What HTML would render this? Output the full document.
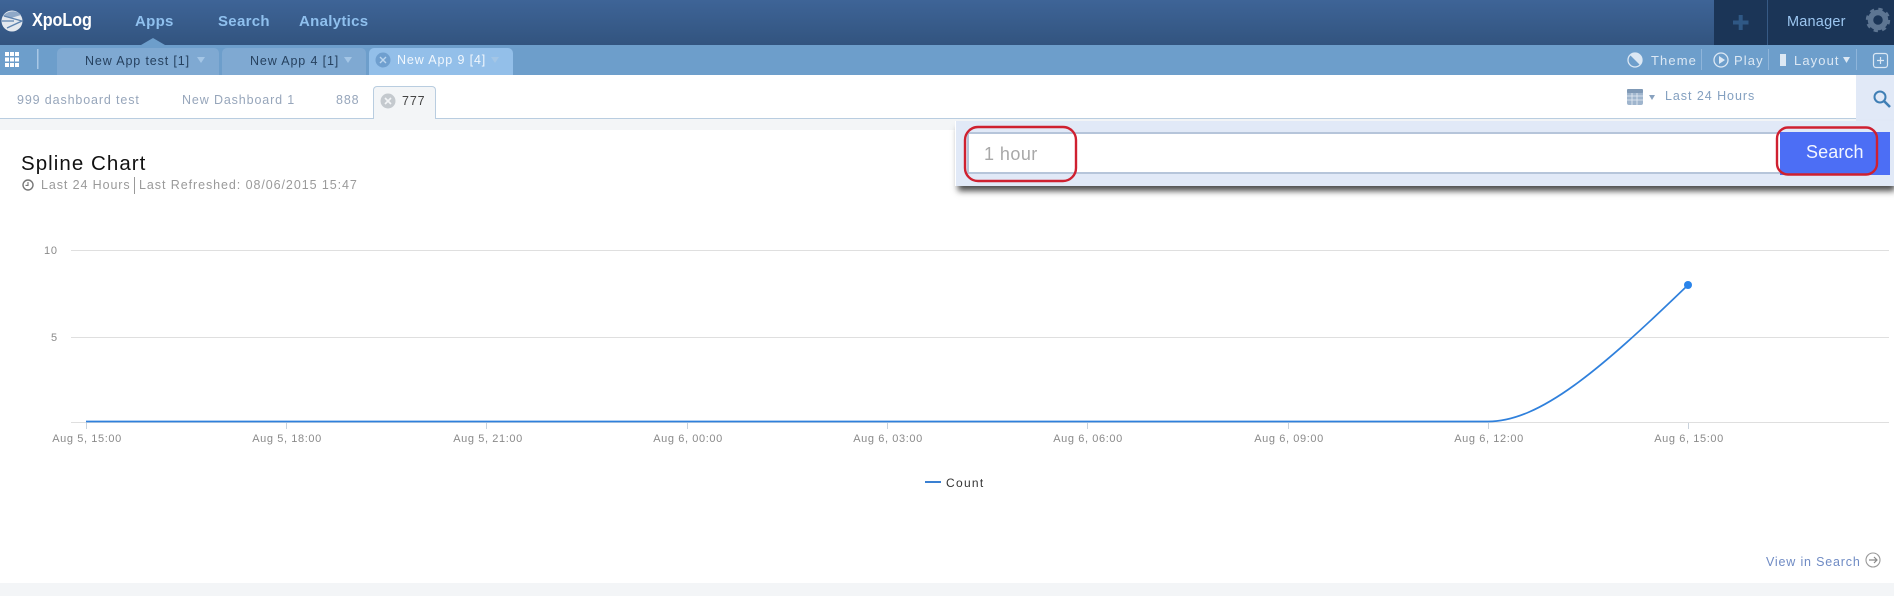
<!DOCTYPE html>
<html><head><meta charset="utf-8"><style>
html,body{margin:0;padding:0;background:#fff}
body{width:1894px;height:596px;position:relative;overflow:hidden;font-family:"Liberation Sans",sans-serif}
.a{position:absolute;white-space:nowrap;line-height:1}
.t{font-size:12.5px;letter-spacing:.87px}
.tab{position:absolute;top:48px;height:27px;border-radius:5px 5px 0 0;background:#7fa9d2}
.x{font-size:11px;letter-spacing:.6px;color:#8a8a8a;top:433.500px;width:90px;text-align:center}
.h{font-size:13px;letter-spacing:1.1px;color:#dce8f4;top:54px}
.n{font-size:15px;font-weight:bold;color:#8fc0ee;letter-spacing:.3px;top:14px}
svg{position:absolute;left:0;top:0}
</style></head><body>
<div class="a" style="left:0;top:0;width:1894px;height:45px;background:linear-gradient(#3e6497,#32547f)"></div>
<div class="a" style="left:1714px;top:0;width:180px;height:45px;background:#1b3557"></div>
<div class="a" style="left:1767px;top:0;width:1px;height:45px;background:#375a85"></div>
<div class="a" style="left:0;top:45px;width:1894px;height:30px;background:#6d9ecb"></div>
<div class="a" style="left:0;top:118px;width:1894px;height:12px;background:#f3f5f7"></div>
<div class="a" style="left:0;top:118px;width:1856px;height:1px;background:#b9cde0"></div>
<div class="a" style="left:0;top:583px;width:1894px;height:13px;background:#f3f5f7"></div>

<div class="a" style="left:32px;top:11px;font-size:18px;font-weight:bold;color:#fff;letter-spacing:-.1px;transform:scaleX(.9);transform-origin:left">XpoLog</div>
<div class="a n" style="left:135px">Apps</div>
<div class="a n" style="left:218px">Search</div>
<div class="a n" style="left:299px">Analytics</div>
<div class="a" style="left:1787px;top:15px;font-size:14.5px;color:#9cc6f0;letter-spacing:.2px">Manager</div>

<div class="tab" style="left:57px;width:162px"></div>
<div class="tab" style="left:222px;width:144px"></div>
<div class="tab" style="left:369px;width:144px;background:#93bfe9"></div>
<div class="a t" style="left:85px;top:55px;color:#26415f">New App test [1]</div>
<div class="a t" style="left:250px;top:55px;color:#26415f">New App 4 [1]</div>
<div class="a t" style="left:397px;top:54px;color:#f1f7fd">New App 9 [4]</div>

<div class="a t" style="left:17px;top:94px;color:#97a6bb">999 dashboard test</div>
<div class="a t" style="left:182px;top:94px;color:#97a6bb">New Dashboard 1</div>
<div class="a t" style="left:336px;top:94px;color:#97a6bb">888</div>
<div class="a" style="left:373px;top:86px;width:63px;height:33px;box-sizing:border-box;background:#f3f5f7;border:1px solid #b9cde0;border-bottom:0;border-radius:4px 4px 0 0"></div>
<div class="a t" style="left:402px;top:95px;color:#444">777</div>

<div class="a" style="left:21px;top:154px;font-size:20.500px;color:#111;letter-spacing:1.05px">Spline Chart</div>
<div class="a" style="left:41px;top:179px;font-size:12.500px;color:#9a9a9a;letter-spacing:.9px">Last 24 Hours</div>
<div class="a" style="left:134px;top:177px;width:1px;height:17px;background:#999"></div>
<div class="a" style="left:139px;top:179px;font-size:12.500px;color:#9a9a9a;letter-spacing:.93px">Last Refreshed: 08/06/2015 15:47</div>

<div class="a h" style="left:1651px">Theme</div>
<div class="a h" style="left:1734px">Play</div>
<div class="a h" style="left:1794px">Layout</div>
<div class="a" style="left:1665px;top:90px;font-size:12.500px;letter-spacing:.95px;color:#84a0c0">Last 24 Hours</div>

<!-- search panel -->
<div class="a" style="left:1856px;top:75px;width:38px;height:46px;background:#e1e9f7"></div>
<div class="a" style="left:955px;top:121px;width:939px;height:65px;box-sizing:border-box;background:#e1e9f7;border-left:1px solid #fff;box-shadow:2px 6px 6px -1px rgba(0,0,0,.7)"></div>
<div class="a" style="left:967px;top:132px;width:815px;height:42px;box-sizing:border-box;background:#fff;border:2px solid #b6c5da;border-right:0"></div>
<div class="a" style="left:984px;top:145px;font-size:18px;color:#a8a8a8;letter-spacing:.45px">1 hour</div>
<div class="a" style="left:1780px;top:132px;width:110px;height:43px;background:#4c6ef5"></div>
<div class="a" style="left:1806px;top:143px;font-size:18px;color:#f2f5ff;letter-spacing:.1px">Search</div>

<!-- chart labels -->
<div class="a" style="left:44px;top:246px;font-size:11px;color:#8a8a8a;letter-spacing:.8px">10</div>
<div class="a" style="left:51px;top:333px;font-size:11px;color:#8a8a8a">5</div>
<div class="a x" style="left:42px">Aug 5, 15:00</div>
<div class="a x" style="left:242px">Aug 5, 18:00</div>
<div class="a x" style="left:443px">Aug 5, 21:00</div>
<div class="a x" style="left:643px">Aug 6, 00:00</div>
<div class="a x" style="left:843px">Aug 6, 03:00</div>
<div class="a x" style="left:1043px">Aug 6, 06:00</div>
<div class="a x" style="left:1244px">Aug 6, 09:00</div>
<div class="a x" style="left:1444px">Aug 6, 12:00</div>
<div class="a x" style="left:1644px">Aug 6, 15:00</div>
<div class="a" style="left:946px;top:477px;font-size:12px;color:#333;letter-spacing:1.3px">Count</div>
<div class="a" style="left:1766px;top:555.500px;font-size:12.500px;color:#6f8bc4;letter-spacing:.82px">View in Search</div>

<svg width="1894" height="596" viewBox="0 0 1894 596" fill="none">
 <!-- nav notch -->
 <path d="M141 45L153 38L165 45Z" fill="#6d9ecb"/>
 <!-- logo -->
 <circle cx="12" cy="21" r="10.500" fill="#e3e8ee"/>
 <path d="M3 16C8 10 17 10 21 15L11 18Z" fill="#8fa9c8"/>
 <path d="M4 16L22 21L7 28M2 21L14 21" stroke="#5c82ae" stroke-width="1.300"/>
 <!-- grid icon -->
 <path fill="#fff" d="M5 52h4v4H5zM10 52h4v4h-4zM15 52h4v4h-4zM5 57.500h4v4H5zM10 57.500h4v4h-4zM15 57.500h4v4h-4zM5 63h4v4H5zM10 63h4v4h-4zM15 63h4v4h-4z"/>
 <rect x="37" y="49" width="1.500" height="20" fill="#a9c8e6"/>
 <!-- tab arrows -->
 <path d="M197 57h8l-4 6zM344 57h8l-4 6zM491 57h8l-4 6z" fill="#a4c6e6"/>
 <circle cx="383" cy="60" r="7.500" fill="#6f9fcf"/>
 <path d="M380 57l6 6M386 57l-6 6" stroke="#bcd6ef" stroke-width="1.400"/>
 <circle cx="388" cy="101" r="7.500" fill="#c4c9ce"/>
 <path d="M385 98l6 6M391 98l-6 6" stroke="#f3f5f7" stroke-width="1.600"/>
 <!-- clock -->
 <circle cx="28" cy="185" r="5" stroke="#777" stroke-width="1.400"/>
 <path d="M28 182v3.400h-2.500" stroke="#777" stroke-width="1.100"/>
 <!-- plus -->
 <path d="M1733 22.500h15.500M1740.700 15v15" stroke="#2f5885" stroke-width="4"/>
 <!-- gear -->
 <circle cx="1878" cy="20" r="7.500" stroke="#5d7592" stroke-width="5.500"/>
 <circle cx="1878" cy="20" r="10.500" stroke="#5d7592" stroke-width="3.400" stroke-dasharray="4.100 4.150"/>
 <!-- theme -->
 <circle cx="1635" cy="60" r="7" stroke="#dce8f4" stroke-width="1.300"/>
 <path d="M1630 55A7 7 0 0 1 1640 65Z" fill="#dce8f4"/>
 <rect x="1701" y="49" width="1" height="21" fill="#8fb5da"/>
 <circle cx="1721" cy="60" r="7" stroke="#dce8f4" stroke-width="1.300"/>
 <path d="M1719 56v8l6-4z" fill="#dce8f4"/>
 <rect x="1768" y="49" width="1" height="21" fill="#8fb5da"/>
 <rect x="1780" y="54" width="6" height="12" fill="#dce8f4"/>
 <path d="M1843 57h7l-3.500 6z" fill="#dce8f4"/>
 <rect x="1856" y="49" width="1" height="21" fill="#8fb5da"/>
 <rect x="1873.500" y="53.500" width="14" height="14" rx="2.500" stroke="#dce8f4" stroke-width="1.200"/>
 <path d="M1877 60.500h7M1880.500 57v7" stroke="#dce8f4" stroke-width="1.200"/>
 <!-- calendar -->
 <rect x="1627" y="89" width="16" height="16" rx="2" fill="#9fb5cd"/>
 <rect x="1627" y="89" width="16" height="4" rx="1" fill="#7f99b6"/>
 <path d="M1627 96h16M1627 100h16M1632 93v12M1637 93v12" stroke="#e6edf5" stroke-width=".8"/>
 <path d="M1649 95h6l-3 5z" fill="#88a2bf"/>
 <!-- magnifier -->
 <circle cx="1880" cy="97" r="5.500" stroke="#3f7fb5" stroke-width="2"/>
 <path d="M1884 101l6 6" stroke="#3f7fb5" stroke-width="2.600"/>
 <!-- red annotations -->
 <rect x="965" y="127" width="111" height="54" rx="13" stroke="#cf2030" stroke-width="2.400"/>
 <rect x="1777" y="127.500" width="100" height="47" rx="11" stroke="#cf2030" stroke-width="2.400"/>
 <!-- chart -->
 <path d="M71 250.500H1889M71 337.500H1889M71 422.500H1889" stroke="#dfdfdf"/>
 <path d="M86.500 423v6M286.500 423v6M486.500 423v6M687.500 423v6M887.500 423v6M1087.500 423v6M1288.500 423v6M1488.500 423v6M1688.500 423v6" stroke="#c9d2dc"/>
 <path d="M86 421.500H1488C1540 421.500 1600 370 1688 285" stroke="#2f80dc" stroke-width="1.700"/>
 <circle cx="1688" cy="285" r="4" fill="#2a84ea"/>
 <path d="M925 482h16" stroke="#3a80d2" stroke-width="2"/>
 <!-- view in search icon -->
 <circle cx="1873" cy="560" r="7" stroke="#999" stroke-width="1.100"/>
 <path d="M1869 560h8M1874 557l3 3-3 3" stroke="#888" stroke-width="1.200"/>
</svg>
</body></html>
